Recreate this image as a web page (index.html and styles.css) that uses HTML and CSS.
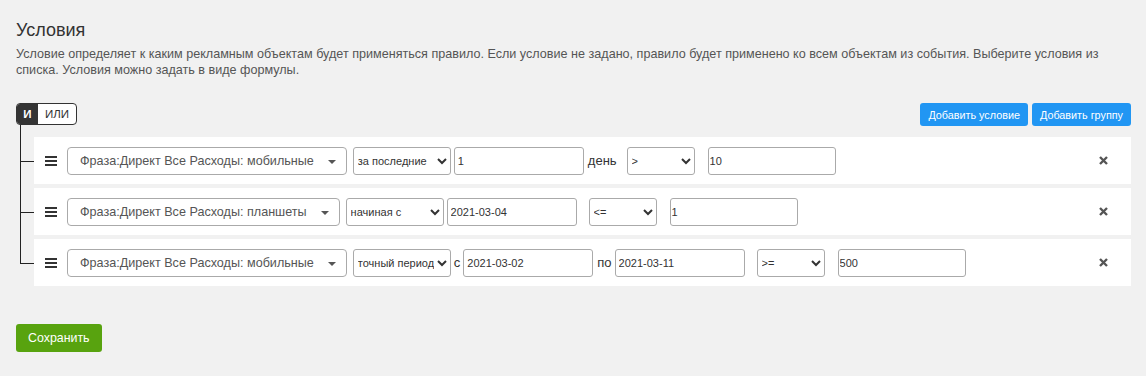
FILE: index.html
```html
<!DOCTYPE html>
<html lang="ru">
  <head>
    <meta charset="UTF-8" />
    <title>Условия</title>
    <link rel="stylesheet" href="styles.css">
  </head>
  <body>
    <div class="page">
      <h3 class="title">Условия</h3>
      <p class="hint">
        Условие определяет к каким рекламным объектам будет применяться правило. Если условие не задано, правило будет применено ко всем объектам из события. Выберите условия из списка. Условия можно задать в виде формулы.
      </p>

      <div class="group">
        <div class="group-head">
          <div class="conj">
            <span class="conj-btn active">И</span>
            <span class="conj-btn">ИЛИ</span>
          </div>
          <div class="group-actions">
            <button class="btn btn-add">Добавить условие</button>
            <button class="btn btn-add">Добавить группу</button>
          </div>
        </div>

        <div class="rules">
          <div class="rule">
            <span class="drag">
              <svg width="12" height="10" viewBox="0 0 12 10"><rect y="0" width="12" height="2"/><rect y="4" width="12" height="2"/><rect y="8" width="12" height="2"/></svg>
            </span>
            <div class="field">Фраза:Директ Все Расходы: мобильные<span class="caret"></span></div>
            <select class="period">
              <option selected>за последние</option>
              <option>начиная с</option>
              <option>точный период</option>
            </select>
            <input class="date" type="text" value="1">
            <span class="label">день</span>
            <select class="op">
              <option>&gt;</option>
            </select>
            <input class="value" type="text" value="10">
            <span class="remove">
              <svg width="9" height="9" viewBox="0 0 9 9"><path d="M1 1 L8 8 M8 1 L1 8"/></svg>
            </span>
          </div>

          <div class="rule">
            <span class="drag">
              <svg width="12" height="10" viewBox="0 0 12 10"><rect y="0" width="12" height="2"/><rect y="4" width="12" height="2"/><rect y="8" width="12" height="2"/></svg>
            </span>
            <div class="field">Фраза:Директ Все Расходы: планшеты<span class="caret"></span></div>
            <select class="period">
              <option>за последние</option>
              <option selected>начиная с</option>
              <option>точный период</option>
            </select>
            <input class="date" type="text" value="2021-03-04">
            <select class="op">
              <option>&lt;=</option>
            </select>
            <input class="value" type="text" value="1">
            <span class="remove">
              <svg width="9" height="9" viewBox="0 0 9 9"><path d="M1 1 L8 8 M8 1 L1 8"/></svg>
            </span>
          </div>

          <div class="rule">
            <span class="drag">
              <svg width="12" height="10" viewBox="0 0 12 10"><rect y="0" width="12" height="2"/><rect y="4" width="12" height="2"/><rect y="8" width="12" height="2"/></svg>
            </span>
            <div class="field">Фраза:Директ Все Расходы: мобильные<span class="caret"></span></div>
            <select class="period">
              <option>за последние</option>
              <option>начиная с</option>
              <option selected>точный период</option>
            </select>
            <span class="label">с</span>
            <input class="date" type="text" value="2021-03-02">
            <span class="label">по</span>
            <input class="date" type="text" value="2021-03-11">
            <select class="op">
              <option>&gt;=</option>
            </select>
            <input class="value" type="text" value="500">
            <span class="remove">
              <svg width="9" height="9" viewBox="0 0 9 9"><path d="M1 1 L8 8 M8 1 L1 8"/></svg>
            </span>
          </div>
        </div>
      </div>

      <button class="btn btn-save">Сохранить</button>
    </div>
  </body>
</html>
```

FILE: styles.css
```css
body {
  margin: 0;
  background: #f1f1f1;
  font-family: "Liberation Sans", Arial, sans-serif;
  color: #333;
}

.page {
  padding: 20px 15px 20px 16px;
}

.title {
  margin: 0;
  font-size: 18px;
  line-height: 20px;
  font-weight: normal;
  color: #333;
}

.hint {
  margin: 6px 0 0;
  font-size: 12.6px;
  line-height: 16px;
  color: #555;
}

.group {
  margin-top: 25px;
}

.group-head {
  display: flex;
  justify-content: space-between;
  align-items: flex-start;
}

.conj {
  display: flex;
  border: 1px solid #333;
  border-radius: 4px;
  overflow: hidden;
  background: #fff;
}

.conj-btn {
  height: 20px;
  line-height: 20px;
  font-size: 11.5px;
  padding: 0 7px;
  color: #333;
}

.conj-btn.active {
  width: 21px;
  padding: 0;
  text-align: center;
  background: #343434;
  color: #fff;
  font-weight: bold;
}

.group-actions {
  display: flex;
  gap: 4px;
}

.btn {
  border: none;
  border-radius: 3px;
  font-family: "Liberation Sans", Arial, sans-serif;
  color: #fff;
  cursor: pointer;
}

.btn-add {
  height: 23px;
  padding: 0 8px;
  font-size: 10.8px;
  background: #2196f3;
}

.rules {
  margin: 11px 0 0 18px;
  display: flex;
  flex-direction: column;
  gap: 4px;
}

.rule {
  position: relative;
  height: 47px;
  background: #fff;
  display: flex;
  align-items: center;
  padding: 0 11px;
}

/* tree lines: from the row above down to this row, then on to the next */
.rule::before {
  content: "";
  position: absolute;
  left: -14px;
  top: -4px;
  width: 13px;
  height: calc(50% + 4px);
  border-left: 1px solid #222;
  border-bottom: 1px solid #222;
}

.rule:first-child::before {
  top: -12px;
  height: calc(50% + 12px);
}

.rule:not(:last-child)::after {
  content: "";
  position: absolute;
  left: -14px;
  top: 50%;
  bottom: 0;
  border-left: 1px solid #222;
}

.drag {
  display: flex;
  width: 12px;
  margin-right: 10px;
  fill: #333;
}

.field {
  position: relative;
  height: 26px;
  line-height: 26px;
  border: 1px solid #aaa;
  border-radius: 4px;
  padding: 0 32px 0 12px;
  font-size: 12.6px;
  color: #555;
  margin-right: 6px;
}

.caret {
  position: absolute;
  right: 10px;
  top: 12px;
  border-left: 4px solid transparent;
  border-right: 4px solid transparent;
  border-top: 4px solid #555;
}

select,
input {
  box-sizing: border-box;
  height: 28px;
  font-family: "Liberation Sans", Arial, sans-serif;
  font-size: 11px;
  color: #333;
  background: #fff;
  border: 1px solid #aaa;
  border-radius: 3px;
}

.period {
  width: 98px;
  margin-right: 3px;
}

.label + .date,
.period + .label {
  margin-left: 0;
}

.date {
  width: 130px;
  padding: 0 3px;
}

.label {
  font-size: 13px;
  margin: 0 3px 0 4px;
}

.op {
  width: 68px;
  margin: 0 13px 0 12px;
}

.label + .op {
  margin-left: 7px;
}

.value {
  width: 128px;
  padding: 0 1px;
}

.remove {
  margin-left: auto;
  margin-right: 12px;
  display: flex;
  stroke: #555;
  stroke-width: 2.4;
}

.btn-save {
  margin-top: 38px;
  height: 28px;
  padding: 0 12px;
  font-size: 12.4px;
  background: #58a30f;
}
```
